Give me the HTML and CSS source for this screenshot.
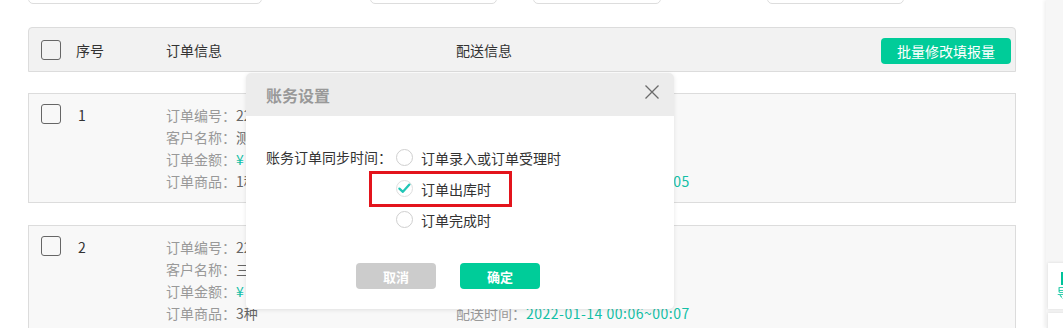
FILE: index.html
```html
<!DOCTYPE html>
<html lang="zh-CN">
<head>
    <meta charset="UTF-8">
    <title>订单列表 - 账务设置</title>
    <link rel="stylesheet" href="styles.css">
</head>
<body>
    <div class="page">
        <!-- 顶部筛选 -->
        <div class="filters">
            <div class="field f1"></div>
            <div class="field f2"></div>
            <div class="field f3"></div>
            <div class="field f4"></div>
        </div>

        <!-- 表头 -->
        <div class="table-head">
            <span class="check"></span>
            <span class="col-no">序号</span>
            <span class="col-order">订单信息</span>
            <span class="col-ship">配送信息</span>
            <button class="btn-batch">批量修改填报量</button>
        </div>

        <div class="order-card">
            <span class="check"></span>
            <span class="col-no">1</span>
            <div class="col-order">
                <p><span class="lbl">订单编号：</span>22</p>
                <p><span class="lbl">客户名称：</span>测</p>
                <p><span class="lbl">订单金额：</span><span class="teal">¥</span></p>
                <p><span class="lbl">订单商品：</span>1种</p>
            </div>
            <div class="col-ship">
                <p><span class="lbl">配送时间：</span><span class="teal">2022-01-14 00:04~00:05</span></p>
            </div>
        </div>

        <div class="order-card">
            <span class="check"></span>
            <span class="col-no">2</span>
            <div class="col-order">
                <p><span class="lbl">订单编号：</span>22</p>
                <p><span class="lbl">客户名称：</span>三</p>
                <p><span class="lbl">订单金额：</span><span class="teal">¥</span></p>
                <p><span class="lbl">订单商品：</span>3种</p>
            </div>
            <div class="col-ship">
                <p><span class="lbl">配送时间：</span><span class="teal">2022-01-14 00:06~00:07</span></p>
            </div>
        </div>
    </div>

    <!-- 右侧工具栏 -->
    <div class="side-bar">
        <div class="side-item">
            <span class="side-icon"></span>
            <span class="side-text">导出</span>
        </div>
        <div class="side-item"></div>
    </div>

    <!-- 账务设置弹窗 -->
    <div class="dialog">
        <div class="dialog-head">
            <span class="dialog-title">账务设置</span>
            <svg class="dialog-close" width="14" height="14" viewBox="0 0 14 14">
                <path d="M0.5 0.5 L13.5 13.5 M13.5 0.5 L0.5 13.5" stroke="#6b6b6b" stroke-width="1.3" fill="none"/>
            </svg>
        </div>
        <div class="dialog-body">
            <div class="form-row">
                <span class="form-label">账务订单同步时间：</span>
                <div class="options">
                    <label class="option"><span class="radio"></span>订单录入或订单受理时</label>
                    <label class="option"><span class="radio checked">
                        <svg width="17" height="17" viewBox="0 0 17 17">
                            <path d="M3.4 8.6 L6.9 11.8 L13.4 4.6" stroke="#22c6b6" stroke-width="2.3" fill="none" stroke-linecap="round" stroke-linejoin="round"/>
                        </svg>
                    </span>订单出库时</label>
                    <label class="option"><span class="radio"></span>订单完成时</label>
                </div>
            </div>
            <div class="dialog-actions">
                <button class="btn btn-cancel">取消</button>
                <button class="btn btn-ok">确定</button>
            </div>
        </div>
        <div class="mark"></div>
    </div>
</body>
</html>
```

FILE: styles.css
```css
html, body {
    overflow: hidden;
}
body {
    margin: 0;
    background-color: #fff;
    font-family: "Microsoft YaHei", "Noto Sans CJK SC", sans-serif;
    font-size: 14px;
    color: #333;
}
p {
    margin: 0;
}
.page {
    width: 988px;
    padding-left: 28px;
}

/* 筛选栏 */
.filters {
    display: flex;
    height: 30px;
    margin-top: -26px;
}
.field {
    height: 30px;
    box-sizing: border-box;
    border: 1px solid #ddd;
    border-radius: 5px;
}
.f1 { width: 234px; }
.f2 { width: 127px; margin-left: 108px; }
.f3 { width: 128px; margin-left: 36px; }
.f4 { width: 137px; margin-left: 106px; }

/* 表头 */
.table-head {
    display: flex;
    align-items: center;
    height: 45px;
    box-sizing: border-box;
    margin-top: 23px;
    padding: 0 4px 0 12px;
    background-color: #f2f2f2;
    border: 1px solid #dcdcdc;
    border-radius: 4px 4px 0 0;
}
.check {
    width: 20px;
    height: 20px;
    box-sizing: border-box;
    border: 1px solid #666;
    border-radius: 3px;
    margin-right: 15px;
    flex-shrink: 0;
}
.col-no {
    width: 90px;
}
.col-order {
    width: 290px;
}
.col-ship {
    flex: 1;
}
.btn-batch {
    width: 130px;
    height: 26px;
    margin-top: 3px;
    border: none;
    border-radius: 4px;
    background-color: #00cc99;
    color: #fff;
    font-family: inherit;
    font-size: 14px;
    padding: 0;
}

/* 订单卡片 */
.order-card {
    display: flex;
    align-items: flex-start;
    margin-top: 21px;
    padding: 10px 12px;
    background-color: #f8f8f8;
    border: 1px solid #dcdcdc;
    line-height: 22px;
    color: #666;
}
.order-card + .order-card {
    margin-top: 22px;
}
.order-card .col-no {
    color: #333;
    padding-left: 2px;
    width: 88px;
}
.order-card .col-ship {
    padding-top: 66px;
}
.lbl {
    color: #999;
}
.teal {
    color: #13bfa6;
}
.col-ship .teal {
    letter-spacing: 0.5px;
}

/* 右侧工具栏 */
.side-bar {
    position: fixed;
    top: 0;
    right: 0;
    width: 17px;
    height: 100%;
    padding-top: 263px;
    box-sizing: border-box;
    background-color: #f6f6f6;
    box-shadow: -2px 0 3px rgba(0, 0, 0, 0.06);
    overflow: hidden;
}
.side-item {
    width: 60px;
    height: 46px;
    margin-left: 2px;
    margin-bottom: 4px;
    background-color: #fff;
    box-shadow: 0 0 3px rgba(0, 0, 0, 0.12);
    padding: 9px 0 0 13px;
    box-sizing: border-box;
}
.side-icon {
    display: block;
    width: 3px;
    height: 13px;
    background-color: #00c39a;
}
.side-text {
    display: block;
    margin-left: -4px;
    font-size: 12px;
    line-height: 16px;
    color: #00c39a;
}

/* 弹窗 */
.dialog {
    position: absolute;
    top: 73px;
    left: 246px;
    width: 428px;
    height: 236px;
    background-color: #fff;
    border-radius: 5px;
    box-shadow: 0 1px 4px rgba(0, 0, 0, 0.1);
    overflow: hidden;
}
.dialog-head {
    display: flex;
    align-items: center;
    justify-content: space-between;
    height: 43px;
    padding: 0 15px 0 20px;
    background-color: #ececec;
}
.dialog-title {
    font-size: 16px;
    font-weight: bold;
    color: #999;
    margin-top: 1px;
}
.dialog-close {
    margin-top: -5px;
}
.dialog-body {
    padding: 26px 0 0 20px;
}
.form-row {
    display: flex;
}
.form-label {
    width: 130px;
    line-height: 31px;
}
.option {
    display: flex;
    align-items: center;
    height: 31px;
}
.radio {
    width: 17px;
    height: 17px;
    box-sizing: border-box;
    border: 1px solid #cfcfcf;
    border-radius: 50%;
    margin-right: 8px;
    display: flex;
    align-items: center;
    justify-content: center;
}
.radio.checked {
    border-color: #dedede;
}
.radio svg {
    flex-shrink: 0;
}
.dialog-actions {
    display: flex;
    gap: 24px;
    margin-top: 28px;
    padding-left: 90px;
}
.btn {
    width: 80px;
    height: 26px;
    border: none;
    border-radius: 4px;
    color: #fff;
    font-family: inherit;
    font-size: 13px;
    font-weight: bold;
    padding: 0;
}
.btn-cancel {
    background-color: #cccccc;
}
.btn-ok {
    background-color: #00cc99;
}

/* 红框标注 */
.mark {
    position: absolute;
    left: 123px;
    top: 98px;
    width: 143px;
    height: 36px;
    box-sizing: border-box;
    border: 3px solid #e3141c;
}
```
